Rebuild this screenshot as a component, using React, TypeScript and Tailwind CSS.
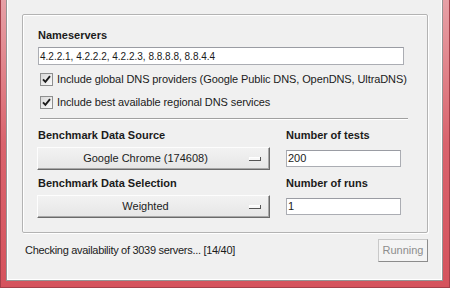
import React from 'react'

const font = { fontFamily: '"Liberation Sans", Arial, sans-serif' }

function Check({ label }: { label: string }) {
  return (
    <div className="flex items-center h-[15px] ml-[2px]">
      <span className="w-[13px] h-[13px] border border-[#8e8f8f] bg-gradient-to-br from-[#d8d8d8] to-[#fbfbfb] flex items-center justify-center shrink-0">
        <svg width="9" height="9" viewBox="0 0 9 9">
          <path d="M1 4.3 L3.4 6.8 L8 1.2" fill="none" stroke="#1c1c1c" strokeWidth="1.9" />
        </svg>
      </span>
      <span className="ml-[4px] text-[11px] text-[#1b1b1b] whitespace-nowrap tracking-[-0.1px]">{label}</span>
    </div>
  )
}

function Dropdown({ value }: { value: string }) {
  return (
    <div className="-ml-px w-[233px] h-[23px] flex items-center bg-gradient-to-b from-[#f2f2f2] to-[#e6e6e6] border-t border-l border-[#fdfdfd] border-b border-r border-b-[#6a6a6a] border-r-[#6a6a6a] shadow-[inset_-1px_-1px_0_#a8a8a8]">
      <span className="flex-1 text-center text-[11px] text-[#1b1b1b] pl-[4px]">{value}</span>
      <span className="w-[12px] h-[4px] mr-[8px] bg-[#f8f8f8] border-b border-r border-[#555] shadow-[inset_1px_1px_0_#fff]" />
    </div>
  )
}

function Field({ value, w }: { value: string; w: string }) {
  return (
    <div className={`${w} h-[17px] bg-white border border-[#abadb3] border-t-[#9a9ca3] flex items-center px-[1px] text-[11px] text-[#1b1b1b] leading-none`}>
      {value}
    </div>
  )
}

export default function App() {
  return (
    <div style={font} className="w-[450px] h-[288px] flex flex-col bg-gradient-to-b from-[#e6a0a6] via-[#d9636d] to-[#d5535d] border-l border-r border-b border-[#a4404a] pl-[5px] pr-[6px] pb-[6px]">
      {/* ── Window body ── */}
      <div className="flex-1 bg-[#f0f0f0] border-l border-r border-b border-[#949494] shadow-[inset_1px_0_0_#fff,inset_-1px_0_0_#fff,inset_0_-1px_0_#fff] pl-[15px] pt-[14px]">

        {/* ── Group box ── */}
        <div className="w-[406px] h-[219px] border border-[#b3b3b3] rounded-[2px] shadow-[inset_1px_1px_0_#fff,1px_1px_0_#fff] pl-[15px] pt-[13px] flex flex-col">
          <div className="h-[15px] leading-[15px] text-[11px] font-bold text-[#1b1b1b]">Nameservers</div>
          <div className="mt-[4px] w-[366px] h-[18px] bg-white border border-[#abadb3] border-t-[#9a9ca3] flex items-center px-[1px] text-[10px] text-[#1b1b1b]">
            4.2.2.1, 4.2.2.2, 4.2.2.3, 8.8.8.8, 8.8.4.4
          </div>
          <div className="mt-[7px]">
            <Check label="Include global DNS providers (Google Public DNS, OpenDNS, UltraDNS)" />
          </div>
          <div className="mt-[8px]">
            <Check label="Include best available regional DNS services" />
          </div>
          <div className="mt-[8px] ml-[2px] w-[368px] h-[2px] border-t border-[#a0a0a0] border-b border-b-white" />

          <div className="mt-[8px] grid grid-cols-[232px_115px] gap-x-[16px] items-center">
            <div className="h-[15px] leading-[15px] text-[11px] font-bold text-[#1b1b1b]">Benchmark Data Source</div>
            <div className="h-[15px] leading-[15px] text-[11px] font-bold text-[#1b1b1b]">Number of tests</div>
            <div className="mt-[4px]"><Dropdown value="Google Chrome (174608)" /></div>
            <div className="mt-[4px]"><Field value="200" w="w-[115px]" /></div>
            <div className="mt-[6px] h-[15px] leading-[15px] text-[11px] font-bold text-[#1b1b1b]">Benchmark Data Selection</div>
            <div className="mt-[6px] h-[15px] leading-[15px] text-[11px] font-bold text-[#1b1b1b]">Number of runs</div>
            <div className="mt-[4px]"><Dropdown value="Weighted" /></div>
            <div className="mt-[4px]"><Field value="1" w="w-[115px]" /></div>
          </div>
        </div>

        {/* ── Status row ── */}
        <div className="mt-[6px] w-[406px] h-[23px] flex items-center justify-between pl-[3px]">
          <span className="text-[11px] text-[#1b1b1b] tracking-[-0.3px]">Checking availability of 3039 servers... [14/40]</span>
          <button className="w-[50px] h-[23px] bg-[#f4f4f4] border border-[#c9c9c9] border-b-[#8c8c8c] border-r-[#8c8c8c] text-[11px] text-[#8d8d8d]">
            Running
          </button>
        </div>
      </div>
    </div>
  )
}
